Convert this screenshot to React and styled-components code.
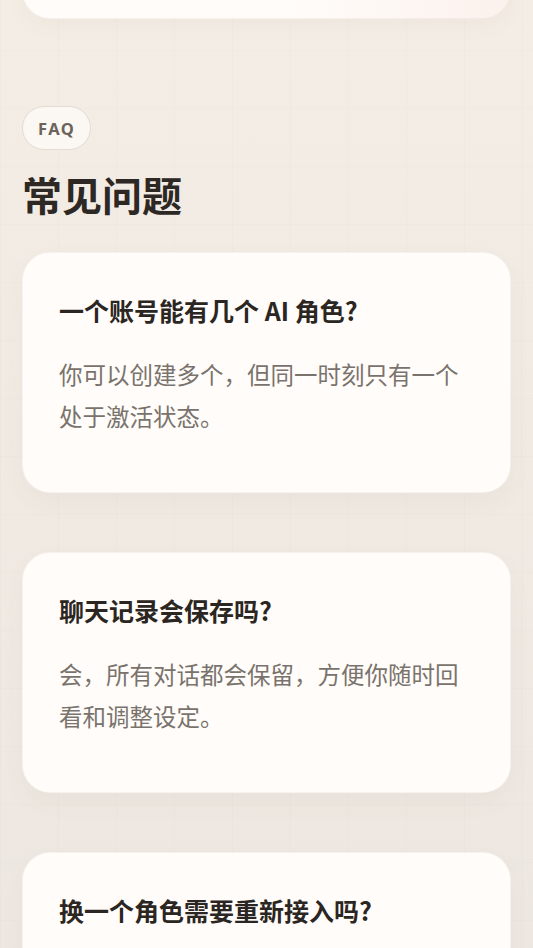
import React from 'react';
import styled, { createGlobalStyle } from 'styled-components';

const GlobalStyle = createGlobalStyle`
  html, body {
    margin: 0;
    padding: 0;
  }
  body {
    font-family: "Noto Sans CJK SC", "Noto Sans", sans-serif;
    background-color: #efe9e2;
    -webkit-font-smoothing: antialiased;
  }
`;

// --- Seite mit feinem Raster ---
const Page = styled.div`
  min-height: 948px;
  overflow: hidden;
  padding: 0 22px 60px;
  box-sizing: border-box;
  background-color: #efe9e2;
  background-image:
    repeating-linear-gradient(90deg, rgba(120, 100, 80, 0.022) 0 1px, transparent 1px 58px),
    repeating-linear-gradient(0deg, rgba(120, 100, 80, 0.018) 0 1px, transparent 1px 58px),
    linear-gradient(180deg, #f3ede5 0%, #f0eae3 40%, #ebe6df 100%);
`;

const PrevCard = styled.div`
  margin-top: -110px;
  height: 127px;
  border-radius: 28px;
  background: linear-gradient(90deg, #fffcf9 0%, #fffbf8 60%, #fbf1ed 100%);
  border: 1px solid rgba(140, 110, 90, 0.07);
  box-shadow: 0 8px 20px rgba(110, 90, 70, 0.04);
`;

const Section = styled.section`
  display: flex;
  flex-direction: column;
  align-items: flex-start;
  padding-top: 87px;
`;

const Pill = styled.span`
  display: inline-flex;
  align-items: center;
  height: 44px;
  padding: 0 15px;
  box-sizing: border-box;
  border-radius: 22px;
  background: #fbf8f3;
  border: 1px solid #e4dcd2;
  color: #6b635c;
  font-family: "Noto Sans", "Noto Sans CJK SC", sans-serif;
  font-size: 16.5px;
  font-weight: 700;
  letter-spacing: 1.5px;
`;

const Heading = styled.h2`
  margin: 18px 0 0;
  font-size: 40px;
  line-height: 52px;
  font-weight: 700;
  color: #2d2824;
`;

const CardList = styled.div`
  align-self: stretch;
  display: flex;
  flex-direction: column;
  gap: 59px;
  margin-top: 32px;
`;

const Card = styled.div`
  padding: 39px 36px 55px;
  border-radius: 28px;
  background: #fffcf9;
  border: 1px solid rgba(140, 110, 90, 0.07);
  box-shadow: 0 10px 24px rgba(110, 90, 70, 0.045);
`;

const Question = styled.h3`
  margin: 0;
  font-size: 25px;
  line-height: 36px;
  font-weight: 700;
  color: #2b2622;
`;

const Answer = styled.p`
  margin: 25px 0 0;
  font-size: 23.5px;
  line-height: 42px;
  font-weight: 400;
  color: #7a736d;
`;

const FAQS = [
  {
    q: '一个账号能有几个 AI 角色?',
    a: '你可以创建多个，但同一时刻只有一个处于激活状态。',
  },
  {
    q: '聊天记录会保存吗?',
    a: '会，所有对话都会保留，方便你随时回看和调整设定。',
  },
  {
    q: '换一个角色需要重新接入吗?',
    a: '不需要，切换角色后会沿用当前的接入配置。',
  },
];

export default function App() {
  return (
    <>
      <GlobalStyle />
      <Page>
        <PrevCard />
        <Section>
          <Pill>FAQ</Pill>
          <Heading>常见问题</Heading>
          <CardList>
            {FAQS.map((item) => (
              <Card key={item.q}>
                <Question>{item.q}</Question>
                <Answer>{item.a}</Answer>
              </Card>
            ))}
          </CardList>
        </Section>
      </Page>
    </>
  );
}
